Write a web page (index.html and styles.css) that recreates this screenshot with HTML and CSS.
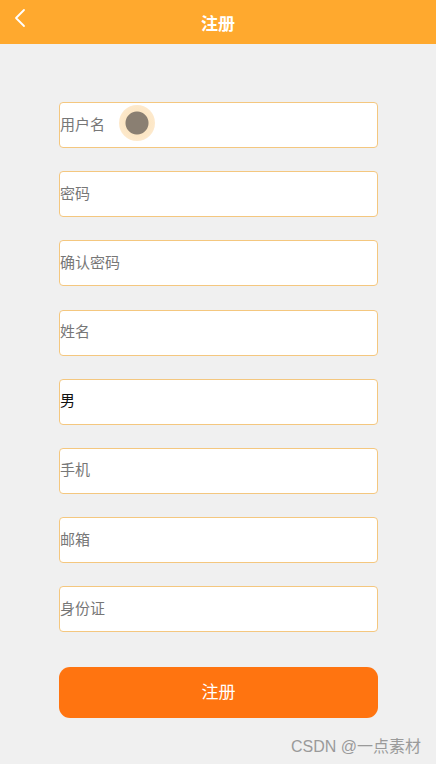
FILE: index.html
```html
<!DOCTYPE html>
<html lang="zh">

<head>
    <meta charset="UTF-8">
    <meta name="viewport" content="width=device-width, initial-scale=1.0">
    <title>注册</title>
    <link rel="stylesheet" href="styles.css">
</head>

<body>
    <header class="top-bar">
        <a class="back" href="#">
            <svg width="14" height="20" viewBox="0 0 14 20">
                <polyline points="11,2 3,10 11,18" fill="none" stroke="#fff" stroke-width="1.8" stroke-linecap="round" stroke-linejoin="round" />
            </svg>
        </a>
        <h1 class="title">注册</h1>
    </header>

    <form class="reg-form">
        <div class="field-row">
            <input class="field" type="text" placeholder="用户名">
            <span class="touch-dot"></span>
        </div>
        <div class="field-row"><input class="field" type="password" placeholder="密码"></div>
        <div class="field-row"><input class="field" type="password" placeholder="确认密码"></div>
        <div class="field-row"><input class="field" type="text" placeholder="姓名"></div>
        <div class="field-row"><input class="field" type="text" value="男"></div>
        <div class="field-row"><input class="field" type="text" placeholder="手机"></div>
        <div class="field-row"><input class="field" type="text" placeholder="邮箱"></div>
        <div class="field-row"><input class="field" type="text" placeholder="身份证"></div>
        <button class="submit-btn" type="submit">注册</button>
    </form>

    <div class="watermark">CSDN @一点素材</div>
</body>

</html>
```

FILE: styles.css
```css
* {
    box-sizing: border-box;
}

body {
    margin: 0;
    background-color: #f0f0f0;
    font-family: "Noto Sans CJK SC", "Liberation Sans", sans-serif;
    height: 764px;
    position: relative;
}

.top-bar {
    height: 44px;
    background-color: #ffa92e;
    display: flex;
    align-items: center;
    justify-content: center;
    position: relative;
}

.back {
    position: absolute;
    left: 13px;
    top: 8px;
    display: block;
}

.title {
    margin: 0;
    color: #fff;
    font-size: 17px;
    font-weight: 700;
}

.reg-form {
    display: flex;
    flex-direction: column;
    gap: 23.2px;
    padding: 58px 58px 0 59px;
}

.field-row {
    position: relative;
}

.field {
    display: block;
    width: 319px;
    height: 46px;
    border: 1px solid #f4c77f;
    border-radius: 4px;
    background: #fff;
    padding: 0 0 4px;
    font-family: inherit;
    font-size: 15px;
    color: #111;
    outline: 0;
}

.field::placeholder {
    color: #777;
}

.touch-dot {
    position: absolute;
    left: 60px;
    top: 3px;
    width: 36px;
    height: 36px;
    border-radius: 50%;
    background: radial-gradient(circle, #8a7f72 0, #8a7f72 11px, #fce6c4 12px, #fde9cc 18px);
}

.submit-btn {
    margin-top: 11px;
    width: 319px;
    height: 51px;
    border: none;
    border-radius: 11px;
    background-color: #ff7410;
    color: #fff;
    font-family: inherit;
    font-size: 17px;
    padding-bottom: 4px;
}

.watermark {
    position: absolute;
    right: 15px;
    bottom: 7px;
    color: #9a9a9a;
    font-family: "Liberation Sans", "Noto Sans CJK SC", sans-serif;
    font-size: 16px;
}
```
